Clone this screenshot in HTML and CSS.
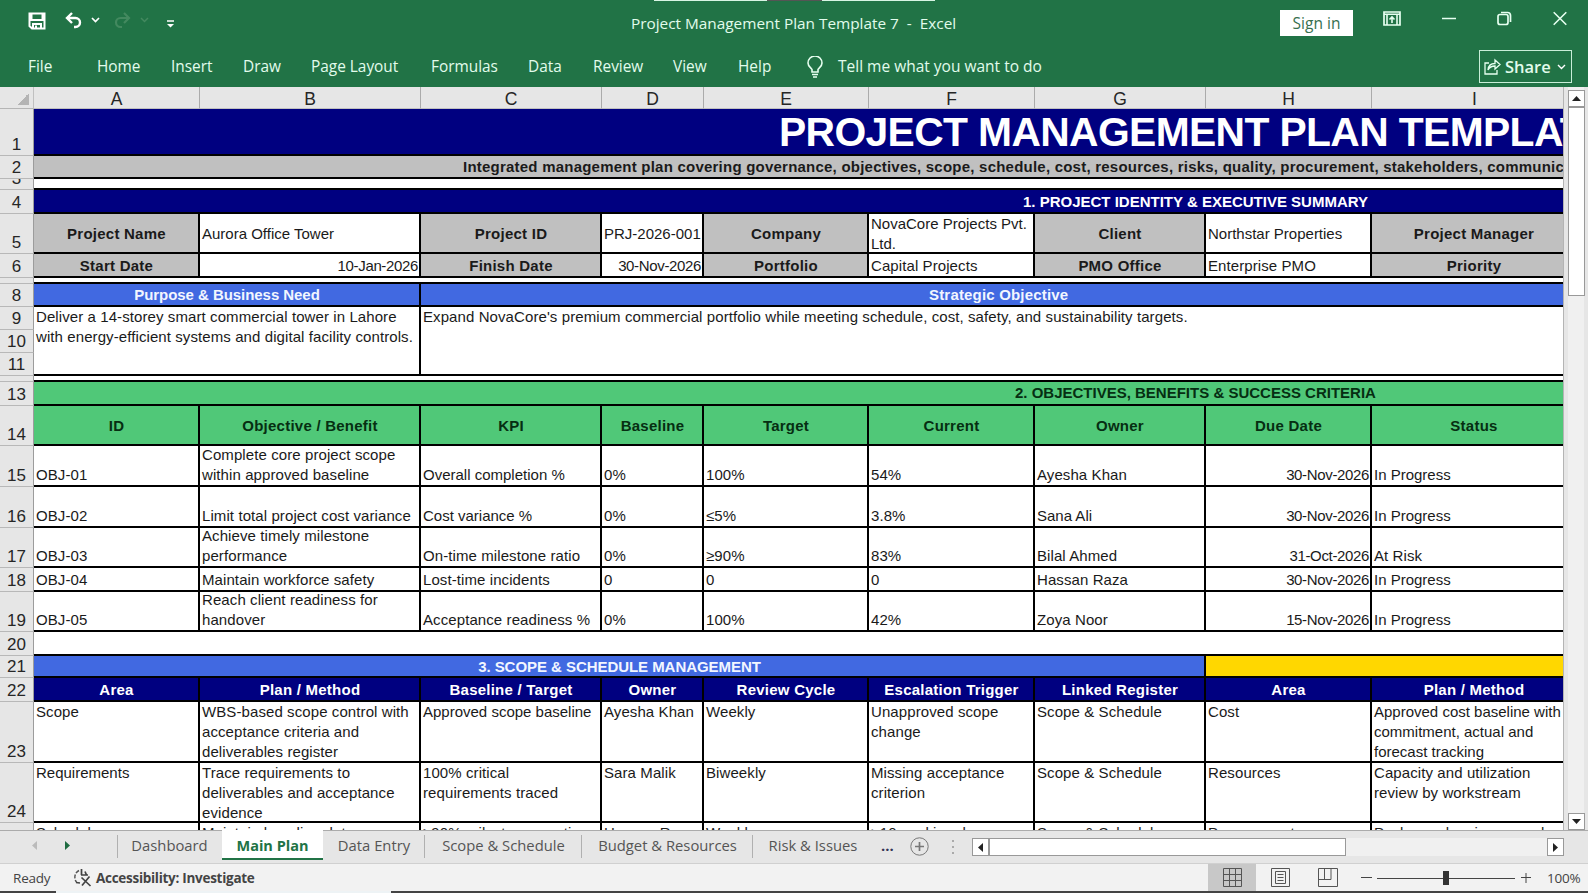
FILE: index.html
```
<!DOCTYPE html>
<html lang="en">
<head>
  <meta charset="UTF-8">
  <title>Project Management Plan Template 7 - Excel</title>
  <link rel="stylesheet" href="styles.css">
</head>
<body>
  <div class="window">
    <header class="ribbon">
      <div class="strip"><i></i><i class="gap"></i><i></i></div>
      <div class="titlebar">
        <div class="quick">
          <svg class="save" width="18" height="18" viewBox="0 0 18 18"><path d="M1.500 1.500h15v15H4L1.500 14zM3.500 1.500v6.500h11v-6.500M5 16.500v-4.500h8v4.500" fill="none" stroke="#fff" stroke-width="2"/><path d="M7 13.500h2v3H7z" fill="#fff"/></svg>
          <svg class="undo" width="18" height="17" viewBox="0 0 18 17"><path d="M7 1L2 6l5 5M2 6h8.500a4.500 4.500 0 0 1 0 9H9" fill="none" stroke="#fff" stroke-width="2.400"/></svg>
          <svg class="chev1" width="9" height="6" viewBox="0 0 9 6"><path d="M1 1l3.500 3.500L8 1" fill="none" stroke="#fff" stroke-width="1.700"/></svg>
          <svg class="redo" width="18" height="17" viewBox="0 0 18 17"><path d="M11 1l5 5-5 5M16 6H7.500a4.500 4.500 0 0 0 0 9H9" fill="none" stroke="#43895f" stroke-width="2.200"/></svg>
          <svg class="chev2" width="9" height="6" viewBox="0 0 9 6"><path d="M1 1l3.500 3.500L8 1" fill="none" stroke="#43895f" stroke-width="1.500"/></svg>
          <svg class="more" width="7" height="8" viewBox="0 0 7 8"><path d="M0 1h7" stroke="#fff" stroke-width="1.500"/><path d="M0 4h7L3.500 7.500z" fill="#fff"/></svg>
        </div>
        <div class="doc-title">Project Management Plan Template 7&nbsp; -&nbsp; Excel</div>
        <button class="signin">Sign in</button>
        <div class="win-buttons">
          <svg width="18" height="15" viewBox="0 0 18 15"><path d="M1 1h16v13H1z" fill="none" stroke="#e6fff0" stroke-width="1.700"/><path d="M1 3.200h16M4 3v11M14 3v11M9 12V6M6.500 8.500L9 6l2.500 2.500" fill="none" stroke="#e6fff0" stroke-width="1.600"/></svg>
          <svg width="14" height="15" viewBox="0 0 14 15"><path d="M0 7.500h14" stroke="#e6fff0" stroke-width="1.500"/></svg>
          <svg width="15" height="15" viewBox="0 0 15 15"><rect x="1" y="3.500" width="10" height="10" rx="2" fill="none" stroke="#e6fff0" stroke-width="1.700"/><path d="M4 1.500h6.500a3 3 0 0 1 3 3V11" fill="none" stroke="#e6fff0" stroke-width="1.700"/></svg>
          <svg width="14" height="15" viewBox="0 0 14 15"><path d="M.7 1.200l12.600 12.600M13.300 1.200L.7 13.800" stroke="#e6fff0" stroke-width="1.600"/></svg>
        </div>
      </div>
      <nav class="menu">
        <span class="m1">File</span><span class="m2">Home</span><span class="m3">Insert</span><span class="m4">Draw</span><span class="m5">Page Layout</span><span class="m6">Formulas</span><span class="m7">Data</span><span class="m8">Review</span><span class="m9">View</span><span class="m10">Help</span>
        <svg class="bulb" width="16" height="22" viewBox="0 0 16 22"><path d="M5 16v-2.500C4 11.500 1 10.500 1 7a7 7 0 0 1 14 0c0 3.500-3 4.500-4 6.500V16zM5 18.500h6M6 21h4" fill="none" stroke="#e6fff0" stroke-width="1.600"/></svg>
        <span class="tell">Tell me what you want to do</span>
        <div class="share">
          <svg width="17" height="17" viewBox="0 0 17 17"><path d="M5 5H1v11h12v-4M11 5.500V2l5 4.500-5 4.500V8C7.500 8 5.500 9 4 12c.3-4 3-6.500 7-6.500z" fill="none" stroke="#e6fff0" stroke-width="1.300"/></svg>
          <b>Share</b>
          <svg width="9" height="6" viewBox="0 0 9 6"><path d="M1 1l3.500 3.500L8 1" fill="none" stroke="#fff" stroke-width="1.400"/></svg>
        </div>
      </nav>
    </header>

    <main class="work">
      <div class="sheet">
        <div class="corner"></div>
        <div class="ch">A</div><div class="ch">B</div><div class="ch">C</div><div class="ch">D</div><div class="ch">E</div><div class="ch">F</div><div class="ch">G</div><div class="ch">H</div><div class="ch last">I</div>

        <div class="rh">1</div><div class="c all navy"><span class="big">PROJECT MANAGEMENT PLAN TEMPLATE</span></div>
        <div class="rh">2</div><div class="c all gray"><span class="sub">Integrated management plan covering governance, objectives, scope, schedule, cost, resources, risks, quality, procurement, stakeholders, communications</span></div>
        <div class="rh cut">3</div><div class="c all"></div>
        <div class="rh">4</div><div class="c all navy"><span class="sec">1. PROJECT IDENTITY &amp; EXECUTIVE SUMMARY</span></div>

        <div class="rh">5</div>
        <div class="c h gray">Project Name</div><div class="c mid flat">Aurora Office Tower</div><div class="c h gray">Project ID</div><div class="c mid flat">PRJ-2026-001</div><div class="c h gray">Company</div><div class="c mid flat">NovaCore Projects Pvt.<br>Ltd.</div><div class="c h gray">Client</div><div class="c mid flat">Northstar Properties</div><div class="c h gray">Project Manager</div>
        <div class="rh">6</div>
        <div class="c h gray">Start Date</div><div class="c mid r">10-Jan-2026</div><div class="c h gray">Finish Date</div><div class="c mid r">30-Nov-2026</div><div class="c h gray">Portfolio</div><div class="c mid">Capital Projects</div><div class="c h gray">PMO Office</div><div class="c mid">Enterprise PMO</div><div class="c h gray">Priority</div>
        <div class="rh"></div><div class="c all"></div>

        <div class="rh">8</div>
        <div class="c h blue two"><span class="s3">Purpose &amp; Business Need</span></div><div class="c blue seven"><span class="strat">Strategic Objective</span></div>
        <div class="rh">9</div>
        <div class="c top two tall">Deliver a 14-storey smart commercial tower in Lahore<br>with energy-efficient systems and digital facility controls.</div><div class="c top seven tall">Expand NovaCore's premium commercial portfolio while meeting schedule, cost, safety, and sustainability targets.</div>
        <div class="rh">10</div>
        <div class="rh">11</div>
        <div class="rh"></div><div class="c all"></div>

        <div class="rh">13</div><div class="c all green"><span class="sec sec2">2. OBJECTIVES, BENEFITS &amp; SUCCESS CRITERIA</span></div>
        <div class="rh">14</div>
        <div class="c h green">ID</div><div class="c h green">Objective / Benefit</div><div class="c h green">KPI</div><div class="c h green">Baseline</div><div class="c h green">Target</div><div class="c h green">Current</div><div class="c h green">Owner</div><div class="c h green">Due Date</div><div class="c h green">Status</div>
        <div class="rh">15</div>
        <div class="c">OBJ-01</div><div class="c">Complete core project scope<br>within approved baseline</div><div class="c flat">Overall completion %</div><div class="c">0%</div><div class="c">100%</div><div class="c">54%</div><div class="c">Ayesha Khan</div><div class="c r">30-Nov-2026</div><div class="c flat">In Progress</div>
        <div class="rh">16</div>
        <div class="c">OBJ-02</div><div class="c">Limit total project cost variance</div><div class="c flat">Cost variance %</div><div class="c">0%</div><div class="c">≤5%</div><div class="c">3.8%</div><div class="c flat">Sana Ali</div><div class="c r">30-Nov-2026</div><div class="c flat">In Progress</div>
        <div class="rh">17</div>
        <div class="c">OBJ-03</div><div class="c">Achieve timely milestone<br>performance</div><div class="c">On-time milestone ratio</div><div class="c">0%</div><div class="c">≥90%</div><div class="c">83%</div><div class="c">Bilal Ahmed</div><div class="c r">31-Oct-2026</div><div class="c">At Risk</div>
        <div class="rh">18</div>
        <div class="c">OBJ-04</div><div class="c">Maintain workforce safety</div><div class="c">Lost-time incidents</div><div class="c">0</div><div class="c">0</div><div class="c">0</div><div class="c">Hassan Raza</div><div class="c r">30-Nov-2026</div><div class="c flat">In Progress</div>
        <div class="rh">19</div>
        <div class="c">OBJ-05</div><div class="c">Reach client readiness for<br>handover</div><div class="c">Acceptance readiness %</div><div class="c">0%</div><div class="c">100%</div><div class="c">42%</div><div class="c">Zoya Noor</div><div class="c r">15-Nov-2026</div><div class="c flat">In Progress</div>
        <div class="rh">20</div><div class="c all"></div>

        <div class="rh">21</div>
        <div class="c h blue scope"><span class="s3">3. SCOPE &amp; SCHEDULE MANAGEMENT</span></div><div class="c gold two"></div>
        <div class="rh">22</div>
        <div class="c h navy">Area</div><div class="c h navy">Plan / Method</div><div class="c h navy">Baseline / Target</div><div class="c h navy">Owner</div><div class="c h navy">Review Cycle</div><div class="c h navy">Escalation Trigger</div><div class="c h navy">Linked Register</div><div class="c h navy">Area</div><div class="c h navy">Plan / Method</div>
        <div class="rh">23</div>
        <div class="c top">Scope</div><div class="c top">WBS-based scope control with<br>acceptance criteria and<br>deliverables register</div><div class="c top flat">Approved scope baseline</div><div class="c top">Ayesha Khan</div><div class="c top">Weekly</div><div class="c top">Unapproved scope<br>change</div><div class="c top">Scope &amp; Schedule</div><div class="c top">Cost</div><div class="c top flat">Approved cost baseline with<br>commitment, actual and<br>forecast tracking</div>
        <div class="rh">24</div>
        <div class="c top flat">Requirements</div><div class="c top">Trace requirements to<br>deliverables and acceptance<br>evidence</div><div class="c top">100% critical<br>requirements traced</div><div class="c top">Sara Malik</div><div class="c top">Biweekly</div><div class="c top">Missing acceptance<br>criterion</div><div class="c top">Scope &amp; Schedule</div><div class="c top">Resources</div><div class="c top">Capacity and utilization<br>review by workstream</div>
        <div class="rh"></div>
        <div class="c top">Schedule</div><div class="c top">Maintain baseline dates</div><div class="c top">≥90% milestones on time</div><div class="c top">Hassan Raza</div><div class="c top">Weekly</div><div class="c top">&gt;10 working days</div><div class="c top">Scope &amp; Schedule</div><div class="c top">Procurement</div><div class="c top">Package planning, award</div>
      </div>
      <div class="vscroll">
        <div class="sbtn"><svg width="9" height="5"><path d="M0 5L4.500 0 9 5z" fill="#222"/></svg></div>
        <div class="vthumb"></div>
        <div class="sbtn down"><svg width="9" height="5"><path d="M0 0h9L4.500 5z" fill="#222"/></svg></div>
      </div>
    </main>

    <div class="tabs">
      <div class="arrows">
        <svg width="5" height="9"><path d="M5 0v9L0 4.500z" fill="#bbb"/></svg>
        <svg width="5" height="9"><path d="M0 0v9l5-4.500z" fill="#1e6b41"/></svg>
      </div>
      <div class="tab t1">Dashboard</div>
      <div class="tab active">Main Plan</div>
      <div class="tab t3">Data Entry</div>
      <div class="tab t4">Scope &amp; Schedule</div>
      <div class="tab t5">Budget &amp; Resources</div>
      <div class="tab t6">Risk &amp; Issues</div>
      <b class="dots">...</b>
      <svg class="plus" width="19" height="19" viewBox="0 0 19 19"><circle cx="9.500" cy="9.500" r="8.700" fill="none" stroke="#777"/><path d="M5 9.500h9M9.500 5v9" stroke="#777" stroke-width="1.700"/></svg>
      <svg class="grip" width="2" height="14"><path d="M0 1h2M0 7h2M0 13h2" stroke="#aaa" stroke-width="2"/></svg>
      <div class="hscroll">
        <div class="hbtn"><svg width="5" height="9"><path d="M5 0v9L0 4.500z" fill="#222"/></svg></div>
        <div class="hthumb"></div>
        <div class="hbtn right"><svg width="5" height="9"><path d="M0 0v9l5-4.500z" fill="#222"/></svg></div>
      </div>
    </div>

    <footer class="status">
      <span class="ready">Ready</span>
      <svg class="acc" width="19" height="19" viewBox="0 0 19 19"><path d="M6 2.500a7.500 7.500 0 0 0-2.500 11.500" fill="none" stroke="#555" stroke-width="1.500" stroke-dasharray="4 1.500"/><path d="M3 14.500l4 .5M8.500 1v6M8 7h7M12 3.500l1.500 3.500M8.500 9.500l9 8.500M16.500 8.500L9 17.500" fill="none" stroke="#444" stroke-width="1.700"/></svg>
      <b class="access">Accessibility: Investigate</b>
      <div class="views">
        <div class="view on"><svg width="19" height="19" viewBox="0 0 19 19"><path d="M.5.5h18v18H.5zM.5 6.500h18M.5 12.500h18M6.500.5v18M12.500.5v18" fill="none" stroke="#555"/></svg></div>
        <div class="view"><svg width="19" height="19" viewBox="0 0 19 19"><path d="M.5.5h18v18H.5zM4.500 3.500h10v12h-10zM6.500 6.500h6M6.500 9.500h6M6.500 12.500h6" fill="none" stroke="#555"/></svg></div>
        <div class="view"><svg width="20" height="19" viewBox="0 0 20 19"><path d="M.5.5h19v18H.5zM.5 11.500h12.500V.5M6.500.5v11" fill="none" stroke="#555"/></svg></div>
      </div>
      <svg class="zoomer" width="170" height="16" viewBox="0 0 170 16"><path d="M0 7.500h11M160 7.500h10M165 3v10M16 8.500h138" stroke="#444" fill="none"/><path d="M82 1h6v14h-6z" fill="#333"/></svg>
      <span class="pct">100%</span>
    </footer>
    <div class="taskbar"><i></i></div>
  </div>
</body>
</html>
```
FILE: styles.css
```
* { box-sizing: border-box; }
body {
  margin: 0;
  background: #e6e6e6;
  font-family: "Open Sans", "Noto Sans", sans-serif;
  overflow: hidden;
}
.window {
  width: 1588px;
  height: 893px;
  display: flex;
  flex-direction: column;
}
svg { display: block; flex: none; }

/* title bar and menu */
.ribbon {
  height: 87px;
  background: #217346;
  color: #e2fcec;
}
.strip {
  height: 1px;
  padding-left: 654px;
  display: flex;
}
.strip i { width: 113px; background: #d8f5e4; }
.strip .gap { width: 55px; background: #555; }
.titlebar {
  height: 46px;
  display: flex;
  align-items: flex-start;
}
.quick {
  width: 631px;
  display: flex;
  padding: 11px 0 0 28px;
}
.undo { margin-left: 19px; }
.chev1 { margin: 5px 0 0 8px; }
.redo { margin-left: 13px; }
.chev2 { margin: 5px 0 0 9px; }
.more { margin: 8px 0 0 18px; }
.doc-title {
  width: 649px;
  padding-top: 10px;
  font-size: 15.350px;
  line-height: 24px;
  white-space: nowrap;
}
.signin {
  width: 73px;
  height: 26px;
  margin-top: 9px;
  padding: 0;
  border: 0;
  background: #fff;
  color: #37704f;
  font: 15.500px/26px "Open Sans", sans-serif;
}
.win-buttons {
  display: flex;
  padding: 10px 0 0 30px;
  gap: 41px;
}
.menu {
  height: 40px;
  display: flex;
  align-items: flex-start;
  padding: 8px 16px 0 28px;
  font-size: 15.400px;
  line-height: 24px;
  white-space: nowrap;
}
.menu span { flex: none; }
.m1 { width: 69px; }
.m2 { width: 74px; }
.m3 { width: 72px; }
.m4 { width: 68px; }
.m5 { width: 120px; }
.m6 { width: 97px; }
.m7 { width: 65px; }
.m8 { width: 80px; }
.m9 { width: 65px; }
.m10 { width: 69px; }
.bulb { margin-top: 1px; }
.menu .tell { margin: -1px auto 0 15px; font-size: 15.500px; }
.share {
  width: 93px;
  height: 33px;
  margin-top: -5px;
  border: 1px solid #c9eed8;
  display: flex;
  align-items: center;
  gap: 4px;
  padding-left: 4px;
  font-size: 16.500px;
}
.share b { font-weight: 600; width: 48px; }

/* worksheet */
.work {
  height: 743px;
  display: flex;
}
.sheet {
  width: 1563px;
  height: 743px;
  flex: none;
  overflow: hidden;
  display: grid;
  grid-template-columns: 34px 166px 221px 181px 102px 165px 166px 171px 166px 205px;
  grid-template-rows: 22px 47px 23px 11px 24px 40px 24px 6px 23px 23px 23px 23px 6px 24px 40px 41px 41px 40px 24px 40px 24px 22px 24px 61px 60px 60px;
  background: #fff;
  font-family: "Liberation Sans", Arial, sans-serif;
  font-size: 15px;
  line-height: 20px;
  color: #1a1a1a;
  white-space: nowrap;
}
.corner, .ch, .rh {
  background: #e6e6e6;
  color: #262626;
}
.corner {
  border-right: 1px solid #c0c0c0;
  border-bottom: 1px solid #b5b5b5;
  background: linear-gradient(135deg, #e6e6e6 50%, #b4b4b4 50%) 17px 6px / 12px 12px no-repeat #e6e6e6;
}
.ch {
  border-right: 1px solid #ababab;
  border-bottom: 1px solid #c0c0c0;
  font-size: 17.500px;
  line-height: 24px;
  text-align: center;
}
.last { border-right: 0; }
.rh {
  grid-column: 1;
  border-right: 1px solid #9c9c9c;
  border-bottom: 1px solid #b8b8b8;
  display: flex;
  align-items: flex-end;
  justify-content: center;
  font-size: 17px;
  line-height: 21px;
  overflow: hidden;
}
.cut { line-height: 15px; padding-bottom: 3px; }
.c {
  min-width: 0;
  overflow: hidden;
  border-right: 2px solid #000;
  border-bottom: 2px solid #000;
  padding: 0 1px 0 2px;
  display: flex;
  align-items: flex-end;
  letter-spacing: 0.090px;
}
.mid { align-items: center; padding-top: 1px; }
.top { align-items: flex-start; }
.flat { letter-spacing: 0; }
.r { justify-content: flex-end; padding-right: 1px; letter-spacing: -0.350px; }
.h {
  align-items: center;
  justify-content: center;
  padding-top: 1px;
  font-weight: bold;
  text-align: center;
  letter-spacing: 0.240px;
}
.all { grid-column: 2 / -1; align-items: center; font-weight: bold; }
.two { grid-column: span 2; }
.seven { grid-column: 4 / -1; }
.tall { grid-row: span 3; }
.scope { grid-column: span 7; }
.navy { background: #000080; color: #fff; }
.gray { background: #c0c0c0; }
.blue { background: #4169e1; color: #f2f6ff; }
.green { background: #50c878; color: #062e12; }
.gold { background: #ffd700; }
.big { padding-left: 743px; font-size: 40.800px; line-height: 44px; letter-spacing: -0.620px; }
.sub { padding-left: 427px; letter-spacing: 0.225px; }
.sec { padding: 1px 0 0 987px; letter-spacing: 0; }
.sec2 { padding: 0 0 0 979px; }
.s3 { letter-spacing: -0.050px; }
.strat { padding-left: 506px; font-weight: bold; letter-spacing: 0.180px; }

/* scrollbars */
.vscroll {
  width: 25px;
  border-left: 1px solid #b4b4b4;
  padding: 3px 4px 0 4px;
  background: linear-gradient(90deg, #e6e6e6 4px, #f0f0f0 4px, #f0f0f0 20px, #e6e6e6 20px);
  display: flex;
  flex-direction: column;
}
.sbtn {
  width: 17px;
  height: 17px;
  border: 1px solid #999;
  background: #fff;
  display: flex;
  align-items: center;
  justify-content: center;
}
.vthumb {
  width: 17px;
  height: 189px;
  border: 1px solid #999;
  background: #fff;
}
.down { margin-top: auto; }

/* sheet tabs */
.tabs {
  height: 33px;
  background: #e6e6e6;
  border-top: 1px solid #ababab;
  display: flex;
  align-items: flex-start;
  color: #555;
  font-size: 14.800px;
  line-height: 29px;
  white-space: nowrap;
}
.arrows {
  width: 117px;
  display: flex;
  gap: 28px;
  padding: 10px 0 0 32px;
}
.tab {
  height: 29px;
  flex: none;
  text-align: center;
  background: linear-gradient(#b0b0b0, #b0b0b0) right 4px / 1px 23px no-repeat;
}
.t1 { width: 105px; background: linear-gradient(#b0b0b0, #b0b0b0) left 4px / 1px 23px no-repeat; }
.active {
  width: 101px;
  height: 30px;
  margin-top: -1px;
  background: #fff;
  border-bottom: 2px solid #217346;
  color: #217346;
  font-weight: bold;
  font-size: 14.500px;
  line-height: 31px;
}
.t3 { width: 102px; }
.t4 { width: 157px; }
.t5 { width: 171px; }
.t6 { width: 120px; background: none; }
.dots { width: 37px; padding-left: 8px; color: #335; }
.plus { margin-top: 6px; }
.grip { margin: 9px 18px 0 23px; }
.hscroll {
  width: 592px;
  height: 18px;
  margin-top: 7px;
  background: #f0f0f0;
  display: flex;
}
.hbtn {
  width: 17px;
  border: 1px solid #999;
  background: #fff;
  display: flex;
  align-items: center;
  justify-content: center;
}
.hthumb {
  width: 357px;
  border: 1px solid #999;
  background: #fff;
}
.right { margin-left: auto; }

/* status bar */
.status {
  height: 28px;
  background: #f2f2f2;
  border-top: 1px solid #d0d0d0;
  display: flex;
  align-items: center;
  color: #444;
  font-size: 13.500px;
  letter-spacing: -0.200px;
  white-space: nowrap;
}
.ready { width: 60px; padding: 1px 0 0 13px; }
.acc { margin-left: 13px; }
.access { margin-left: 4px; letter-spacing: -0.280px; }
.views { margin-left: auto; display: flex; }
.view {
  width: 48px;
  height: 27px;
  display: flex;
  align-items: center;
  justify-content: center;
}
.on { background: #c8c8c8; }
.zoomer { margin-left: 9px; }
.pct { width: 41px; margin-left: 16px; }
.taskbar { height: 2px; background: #444; padding-left: 56px; }
.taskbar i { display: block; width: 335px; height: 2px; background: #eef3f5; }
```
